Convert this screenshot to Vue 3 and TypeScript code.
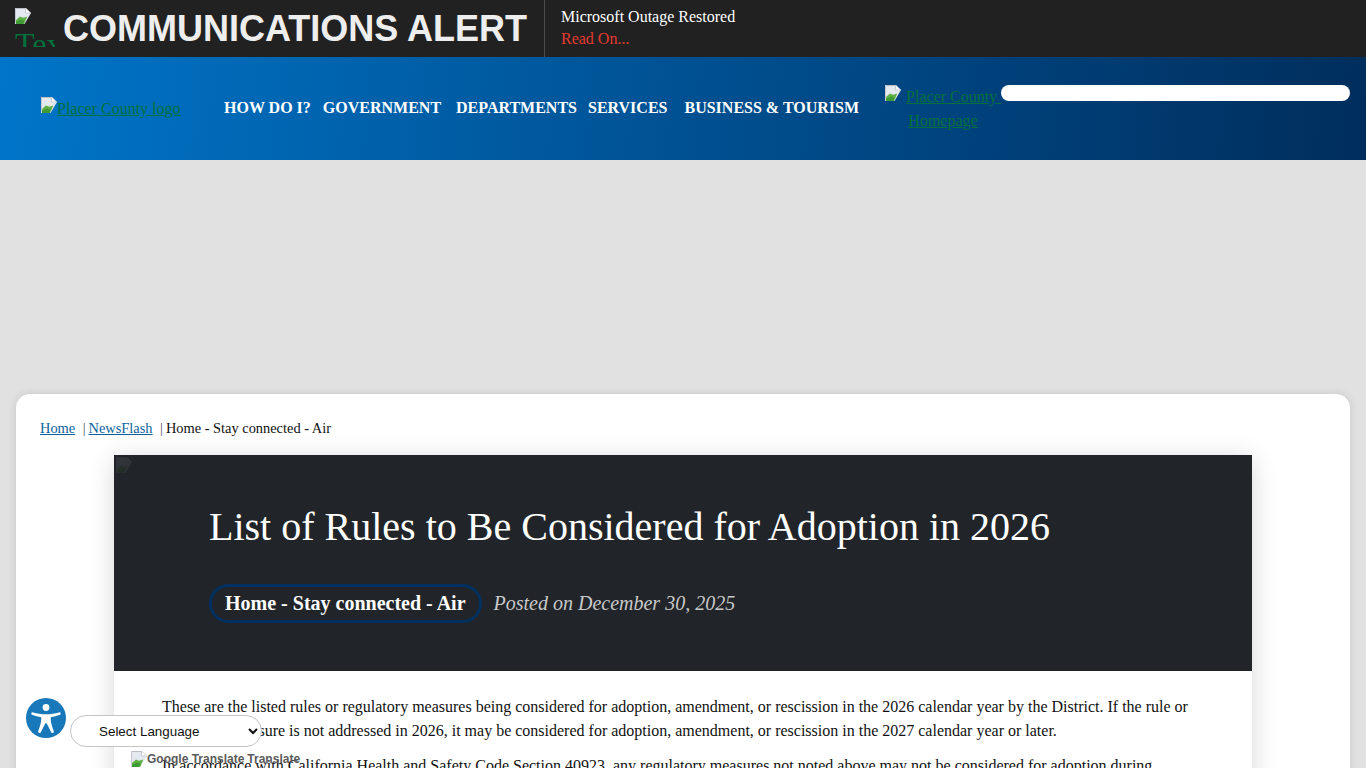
<template>
  <div class="page">
    <svg class="sprite" width="0" height="0" aria-hidden="true">
      <symbol id="broken" viewBox="0 0 16 16">
        <path d="M0 0H11L16 5L9.5 16H0Z" fill="#e4e9f0" />
        <path d="M0.5 0.5H10.8L15.5 5.2" fill="none" stroke="#b9bec4" />
        <path d="M0.5 0.5V15.5" stroke="#c6cad0" />
        <path d="M10.5 0.5V5H15.5" fill="#fff" stroke="#c6cad0" />
        <path d="M1 16V12L5 8.5L8 9.8L12.3 8.5L9 16Z" fill="#5fb043" />
        <path d="M1 16V14L6 11.5L9.5 12.8L8 16Z" fill="#3f9a35" />
      </symbol>
    </svg>

    <div class="alert-bar">
      <a class="alert-logo" href="#">
        <svg class="broken-icon"><use href="#broken" /></svg>
        <span class="alert-alt">Text Alert</span>
      </a>
      <div class="alert-title">COMMUNICATIONS ALERT</div>
      <div class="alert-message">
        <div class="alert-headline">Microsoft Outage Restored</div>
        <a class="alert-read" href="#">Read On...</a>
      </div>
    </div>

    <header class="site-header">
      <a class="logo-link" href="#">
        <svg class="broken-icon"><use href="#broken" /></svg>Placer County logo
      </a>
      <nav class="main-nav">
        <a v-for="item in navItems" :key="item" href="#">{{ item }}</a>
      </nav>
      <a class="home-link" href="#">
        <svg class="broken-icon"><use href="#broken" /></svg>Placer County&nbsp;<br />Homepage
      </a>
      <div class="search-box"></div>
    </header>

    <div class="banner-space"></div>

    <main class="content-card">
      <div class="breadcrumb">
        <a href="#">Home</a>
        <span class="crumb-sep">|</span>
        <a href="#">NewsFlash</a>
        <span class="crumb-sep">|</span>
        <span>Home - Stay connected - Air</span>
      </div>

      <article class="news-card">
        <div class="news-hero">
          <svg class="hero-image"><use href="#broken" /></svg>
          <h1>List of Rules to Be Considered for Adoption in 2026</h1>
          <div class="hero-meta">
            <span class="hero-tag">Home - Stay connected - Air</span>
            <em>Posted on December 30, 2025</em>
          </div>
        </div>
        <div class="news-body">
          <p v-for="text in paragraphs" :key="text">{{ text }}</p>
        </div>
      </article>
    </main>

    <button class="access-btn" aria-label="Accessibility">
      <svg viewBox="0 0 40 40" width="40" height="40">
        <circle cx="20" cy="20" r="20" fill="#1878b9" />
        <circle cx="20" cy="9.5" r="3.4" fill="#fff" />
        <path d="M6.5 14.2C11 15.6 15.5 16.2 20 16.2S29 15.6 33.5 14.2C34.6 14 35.2 16.2 34.1 16.7C31 17.9 27.8 18.8 24.8 19.2C24.6 23 25.2 26 27.8 33.2C28.3 34.9 26 35.8 25.2 34.2L20.6 25.2H19.4L14.8 34.2C14 35.8 11.7 34.9 12.2 33.2C14.8 26 15.4 23 15.2 19.2C12.2 18.8 9 17.9 5.9 16.7C4.8 16.2 5.4 14 6.5 14.2Z" fill="#fff" />
      </svg>
    </button>

    <div class="translate">
      <select class="lang-select">
        <option>Select Language</option>
      </select>
      <div class="translate-credit">
        <svg class="broken-icon"><use href="#broken" /></svg>
        <span>Google Translate</span>
        <span>Translate</span>
      </div>
    </div>
  </div>
</template>

<script setup lang="ts">
const navItems: string[] = [
  'HOW DO I?',
  'GOVERNMENT',
  'DEPARTMENTS',
  'SERVICES',
  'BUSINESS & TOURISM',
]

const paragraphs: string[] = [
  'These are the listed rules or regulatory measures being considered for adoption, amendment, or rescission in the 2026 calendar year by the District. If the rule or regulatory measure is not addressed in 2026, it may be considered for adoption, amendment, or rescission in the 2027 calendar year or later.',
  'In accordance with California Health and Safety Code Section 40923, any regulatory measures not noted above may not be considered for adoption during',
]
</script>

<style>
html,
body {
  margin: 0;
  height: 100%;
  overflow: hidden;
}
</style>

<style scoped>
.page {
  position: relative;
  height: 768px;
  overflow: hidden;
  background: #e1e1e1;
  font-family: "Liberation Serif", "Times New Roman", serif;
  color: #111;
}
.sprite {
  position: absolute;
}
.broken-icon {
  width: 16px;
  height: 16px;
  flex: none;
}

.alert-bar {
  display: flex;
  align-items: stretch;
  height: 57px;
  background: #212121;
}
.alert-logo {
  display: block;
  width: 40px;
  height: 39px;
  margin: 8px 0 0 15px;
  overflow: hidden;
  color: #00703c;
  font-size: 32px;
  line-height: 40px;
  text-decoration: none;
}
.alert-logo .broken-icon {
  display: block;
}
.alert-alt {
  display: block;
  width: 200px;
}
.alert-title {
  margin-left: 8px;
  padding-right: 17px;
  border-right: 1px solid #4d4d4d;
  font-family: "Liberation Sans", Arial, sans-serif;
  font-size: 36px;
  font-weight: 700;
  line-height: 57px;
  color: #eeeeee;
  white-space: nowrap;
}
.alert-message {
  padding: 6px 0 0 16px;
  font-size: 16px;
  line-height: 22px;
}
.alert-headline {
  color: #fff;
}
.alert-read {
  color: #e8392f;
  text-decoration: none;
}

.site-header {
  display: flex;
  align-items: flex-start;
  height: 103px;
  box-sizing: border-box;
  padding: 28px 16px 0 41px;
  background: linear-gradient(95deg, #0075c9 0%, #00589d 40%, #003f78 75%, #002e5c 100%);
}
.logo-link,
.home-link {
  color: #00703c;
  font-size: 16px;
  line-height: 24px;
}
.logo-link {
  width: 183px;
  flex: none;
  padding-top: 12px;
}
.logo-link .broken-icon,
.home-link .broken-icon {
  vertical-align: top;
}
.main-nav {
  display: flex;
  width: 661px;
  flex: none;
  padding-top: 12px;
  font-size: 16px;
  font-weight: 700;
  line-height: 22px;
}
.main-nav a {
  color: #fff;
  text-decoration: none;
  white-space: nowrap;
}
.main-nav a:nth-child(2) {
  margin-left: 12px;
}
.main-nav a:nth-child(3) {
  margin-left: 15px;
}
.main-nav a:nth-child(4) {
  margin-left: 11px;
}
.main-nav a:nth-child(5) {
  margin-left: 17px;
}
.home-link {
  width: 116px;
  flex: none;
  text-align: center;
  white-space: nowrap;
}
.home-link .broken-icon {
  margin-right: 5px;
}
.search-box {
  flex: 1;
  height: 16px;
  border-radius: 8px;
  background: #fff;
}

.banner-space {
  height: 234px;
}

.content-card {
  margin: 0 16px;
  padding: 24px 24px 0;
  height: 400px;
  box-sizing: border-box;
  border-radius: 14px;
  background: #fff;
  box-shadow: 0 0 8px rgba(0, 0, 0, 0.12);
}
.breadcrumb {
  font-size: 14.4px;
  line-height: 20px;
  white-space: nowrap;
}
.breadcrumb a {
  color: #0b5f9e;
}
.crumb-sep {
  margin: 0 3px 0 7.5px;
  color: #555;
}
.news-card {
  margin: 17px 74px 0;
  box-shadow: 0 4px 24px rgba(0, 0, 0, 0.16);
}
.news-hero {
  position: relative;
  height: 216px;
  box-sizing: border-box;
  padding: 48px 95px 0;
  background: #212529;
  color: #fff;
}
.hero-image {
  position: absolute;
  top: 2px;
  left: 2px;
  width: 16px;
  height: 16px;
  opacity: 0.08;
}
.news-hero h1 {
  margin: 0;
  font-size: 40px;
  font-weight: 400;
  line-height: 48px;
}
.hero-meta {
  display: flex;
  align-items: center;
  gap: 12px;
  margin-top: 33px;
  font-size: 20px;
}
.hero-tag {
  padding: 7px 13px;
  border: 3px solid #00305f;
  border-radius: 20px;
  font-weight: 700;
  line-height: 19px;
}
.hero-meta em {
  color: #c9c9c9;
}
.news-body {
  padding: 24px 48px;
  background: #fff;
  font-size: 16px;
  line-height: 24px;
}
.news-body p {
  margin: 0 0 11px;
}

.access-btn {
  position: absolute;
  left: 26px;
  top: 698px;
  width: 40px;
  height: 40px;
  padding: 0;
  border: 0;
  background: none;
}
.translate {
  position: absolute;
  left: 70px;
  top: 715px;
}
.lang-select {
  display: block;
  width: 192px;
  height: 32px;
  padding-left: 24px;
  border: 1px solid #c4c4c4;
  border-radius: 16px;
  background: #fff;
  color: #111;
  font-family: "Liberation Sans", Arial, sans-serif;
  font-size: 13.4px;
}
.translate-credit {
  display: flex;
  gap: 3px;
  margin: 4px 0 0 61px;
  font-family: "Liberation Sans", Arial, sans-serif;
  font-size: 12px;
  font-weight: 700;
  line-height: 16px;
  color: #5a5a5a;
  white-space: nowrap;
}
.translate-credit .broken-icon {
  margin-right: -3px;
}
</style>
